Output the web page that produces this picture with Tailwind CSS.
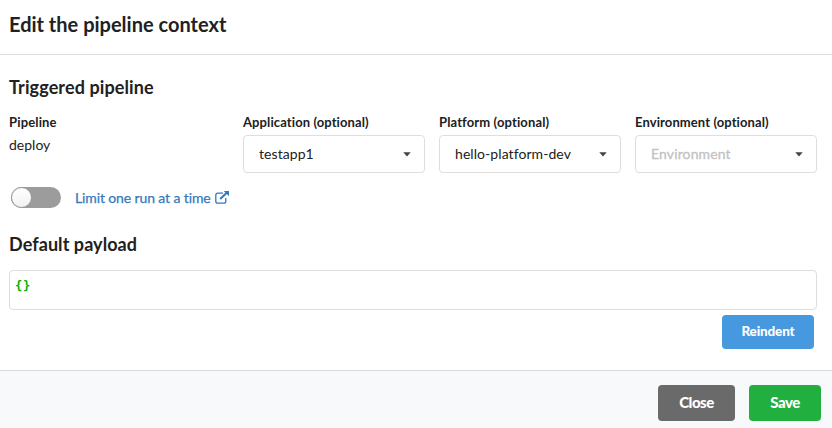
<!DOCTYPE html>
<html lang="en"><head><meta charset="utf-8"><title>Edit the pipeline context</title><script src="https://cdn.jsdelivr.net/npm/@tailwindcss/browser@4"></script></head>
<body class="w-[832px] h-[428px] overflow-hidden bg-white font-['Lato',sans-serif] text-sm text-[#212121] flex flex-col">
<header class="h-[55px] shrink-0 border-b border-[#dcdddd] pl-[9px] pt-[10px]"><h1 class="text-[20px] leading-[28px] font-bold">Edit the pipeline context</h1></header>
<main class="h-[315px] shrink-0 pl-[9px] pr-[15px] pt-[20px]">
<h2 class="text-[18px] leading-[24px] font-bold tracking-[0.11px]">Triggered pipeline</h2>
<div class="flex mt-[15px] h-[59px]">
<div class="w-[234px]"><div class="text-[13px] leading-[17px] font-bold tracking-[0.15px]">Pipeline</div><div class="leading-[20px] mt-[4px]">deploy</div></div>
<div class="flex gap-[14px]">
<div class="w-[182px]"><div class="text-[13px] leading-[17px] font-bold tracking-[0.1px]">Application (optional)</div><div class="mt-1 h-[38px] border border-[#dededf] rounded flex items-center justify-between pl-[15px] pr-[13px]"><span class="tracking-[0.07px]">testapp1</span><svg width="8" height="5" viewBox="0 0 8 5"><path d="M0.3 0.2h7.4L4 4.5z" fill="#444"/></svg></div></div>
<div class="w-[182px]"><div class="text-[13px] leading-[17px] font-bold tracking-[0.13px]">Platform (optional)</div><div class="mt-1 h-[38px] border border-[#dededf] rounded flex items-center justify-between pl-[15px] pr-[13px]"><span class="tracking-[0.07px]">hello-platform-dev</span><svg width="8" height="5" viewBox="0 0 8 5"><path d="M0.3 0.2h7.4L4 4.5z" fill="#444"/></svg></div></div>
<div class="w-[182px]"><div class="text-[13px] leading-[17px] font-bold tracking-[0.1px]">Environment (optional)</div><div class="mt-1 h-[38px] border border-[#dededf] rounded flex items-center justify-between pl-[15px] pr-[13px]"><span class="text-[#c2c2c2] tracking-[0.13px] [-webkit-text-stroke:0.3px]">Environment</span><svg width="8" height="5" viewBox="0 0 8 5"><path d="M0.3 0.2h7.4L4 4.5z" fill="#444"/></svg></div></div>
</div></div>
<div class="flex items-center mt-[13px] h-[23px] pl-[2px] text-[#3479bd]"><div class="w-[50px] h-[21px] rounded-full bg-[#9c9c9c] flex items-center"><div class="size-[21px] rounded-full border border-[#9c9c9c] bg-linear-to-b from-white to-[#f2f2f2]"></div></div><span class="ml-[14px] tracking-[-0.12px] [-webkit-text-stroke:0.25px]">Limit one run at a time</span><svg class="ml-[4px] mb-[1px]" width="14" height="13" viewBox="0 0 14 13" fill="none" stroke="currentColor" stroke-width="1.3"><path d="M8 2.2H2.8Q.8 2.2.8 4.2v6q0 2 2 2h6q2 0 2-2V7"/><path d="M5.2 8 12 1.5" stroke-width="2"/><path d="M8.7 0H14v5.3z" fill="currentColor" stroke="none"/></svg></div>
<h2 class="text-[18px] leading-[24px] font-bold mt-[23px] tracking-[0.07px]">Default payload</h2>
<div class="mt-[14px] h-[40px] border border-[#dededf] rounded pl-[5px] pt-[5px] font-['DejaVu_Sans_Mono',monospace] text-[12px] leading-[20px] font-bold tracking-[0.8px] text-[#00b000]">{}</div>
<div class="flex justify-end mt-[5px] pr-[3px]"><button class="w-[92px] h-[34px] rounded bg-[#4799df] text-white text-[13.5px] font-black tracking-[-0.15px]">Reindent</button></div>
</main>
<footer class="flex-1 border-t border-[#d9dadb] bg-[#f8f9fb] flex justify-end gap-[14px] pt-[14px] pr-[11px]"><button class="w-[77px] h-[36px] rounded bg-[#6a6a6a] text-white text-[15px] font-black tracking-[-0.5px]">Close</button><button class="w-[72px] h-[36px] rounded bg-[#21b03f] text-white text-[15px] font-black tracking-[-0.5px]">Save</button></footer>
</body></html>
